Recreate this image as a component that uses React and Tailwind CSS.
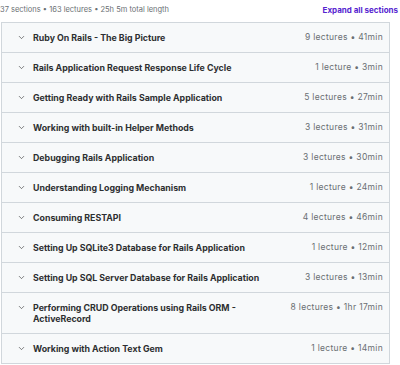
import React from 'react';
import { ChevronDown } from 'lucide-react';

const sections = [
  { title: 'Ruby On Rails - The Big Picture', meta: '9 lectures • 41min' },
  { title: 'Rails Application Request Response Life Cycle', meta: '1 lecture • 3min' },
  { title: 'Getting Ready with Rails Sample Application', meta: '5 lectures • 27min' },
  { title: 'Working with built-in Helper Methods', meta: '3 lectures • 31min' },
  { title: 'Debugging Rails Application', meta: '3 lectures • 30min' },
  { title: 'Understanding Logging Mechanism', meta: '1 lecture • 24min' },
  { title: 'Consuming RESTAPI', meta: '4 lectures • 46min' },
  { title: 'Setting Up SQLite3 Database for Rails Application', meta: '1 lecture • 12min' },
  { title: 'Setting Up SQL Server Database for Rails Application', meta: '3 lectures • 13min' },
  { title: 'Performing CRUD Operations using Rails ORM - ActiveRecord', meta: '8 lectures • 1hr 17min' },
  { title: 'Working with Action Text Gem', meta: '1 lecture • 14min' },
];

const App = () => {
  return (
    <div className="w-[400px] h-[365px] overflow-hidden bg-white font-['Inter',sans-serif]">
      <div className="flex items-center justify-between h-[22px] pb-[2px] pr-[2px]">
        <span className="text-[7.5px] text-[#6a6f73]">37 sections • 163 lectures • 25h 5m total length</span>
        <span className="text-[8px] font-bold text-[#5624d0]">Expand all sections</span>
      </div>
      <div className="ml-px w-[389px] border border-[#d1d7dc] border-b-0">
        {sections.map((s) => (
          <div
            key={s.title}
            className="flex items-start justify-between bg-[#f7f9fa] border-b border-[#d1d7dc] pl-[15px] pr-[6px] py-[9px]"
          >
            <div className="flex items-start gap-[7px]">
              <ChevronDown size={9} strokeWidth={1.6} className="text-[#2d2f31] mt-[1px] shrink-0" />
              <span className="text-[8.8px] leading-[11px] font-bold text-[#2d2f31] max-w-[238px]">{s.title}</span>
            </div>
            <span className="text-[8.5px] leading-[11px] tracking-[0.3px] text-[#6a6f73] whitespace-nowrap">{s.meta}</span>
          </div>
        ))}
      </div>
    </div>
  );
};

export default App;
